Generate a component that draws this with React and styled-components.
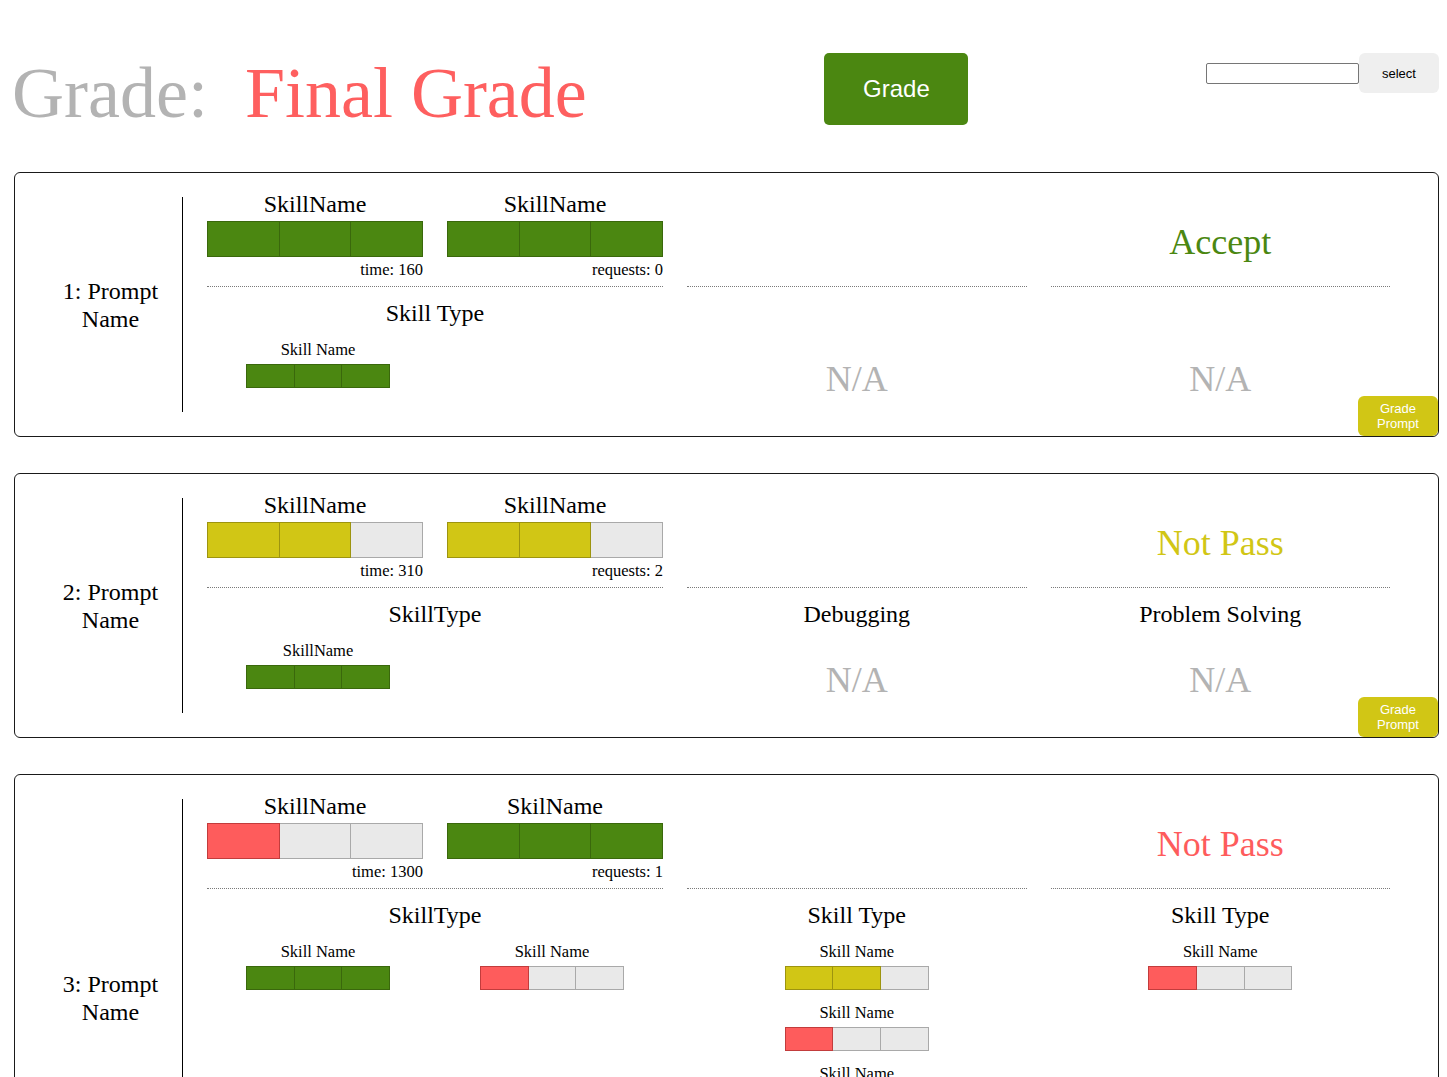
import React from 'react';
import styled, { createGlobalStyle } from 'styled-components';

const GlobalStyle = createGlobalStyle`
  *, *::before, *::after {
    box-sizing: border-box;
  }
  body {
    margin: 0;
    background: #ffffff;
    color: #000000;
    font-family: "Liberation Serif", "Times New Roman", serif;
  }
`;

const tones = {
  green: { bg: '#4b8711', line: '#3a680c' },
  yellow: { bg: '#d1c615', line: '#9d940f' },
  red: { bg: '#fe5c5c', line: '#c23c3c' },
  empty: { bg: '#e9e9e9', line: '#a9a9a9' },
};

const levelTone = { 3: 'green', 2: 'yellow', 1: 'red' };

const Page = styled.div`
  padding: 53px 8px 40px 14px;
`;

const Header = styled.header`
  display: flex;
  justify-content: space-between;
  align-items: flex-start;
  margin-bottom: 39px;
`;

const Title = styled.h1`
  margin: 0 0 0 -2px;
  font-size: 72px;
  font-weight: normal;
  line-height: 80px;
  white-space: nowrap;
`;

const TitleLabel = styled.span`
  color: #b3b3b3;
  margin-right: 37px;
`;

const TitleValue = styled.span`
  color: #fe5f5f;
`;

const GradeButton = styled.button`
  width: 144px;
  height: 72px;
  border: none;
  border-radius: 5px;
  background: #4b8711;
  color: #ffffff;
  font-family: "Liberation Sans", Arial, sans-serif;
  font-size: 24px;
`;

const Search = styled.div`
  display: flex;
  align-items: center;
`;

const SearchInput = styled.input`
  width: 153px;
  height: 21px;
  border: 1px solid #767676;
  border-radius: 2px;
  padding: 1px 2px;
  font-size: 13px;
`;

const SelectButton = styled.button`
  width: 80px;
  height: 40px;
  border: none;
  border-radius: 6px;
  background: #efefef;
  color: #000000;
  font-family: "Liberation Sans", Arial, sans-serif;
  font-size: 13px;
`;

const Card = styled.section`
  position: relative;
  display: flex;
  border: 1px solid #1a1a1a;
  border-radius: 6px;
  padding: 18px 24px 24px;
  margin-bottom: 36px;
`;

const PromptCol = styled.div`
  flex: 0 0 144px;
  margin-top: 6px;
  border-right: 1px solid #000000;
  display: flex;
  align-items: center;
  justify-content: center;
  text-align: center;
  font-size: 24px;
  line-height: 28px;
`;

const Body = styled.div`
  flex: 1;
  padding: 0 24px;
  display: grid;
  grid-template-columns: 456px 1fr 1fr;
  column-gap: 24px;
`;

const TopCell = styled.div`
  display: flex;
  gap: 24px;
  align-items: ${p => (p.$center ? 'center' : 'flex-start')};
  justify-content: center;
  padding-bottom: 7px;
  border-bottom: 1px dotted #7a7a7a;
`;

const SkillBlock = styled.div`
  width: 216px;
`;

const SkillLabel = styled.div`
  font-size: 24px;
  line-height: 27px;
  text-align: center;
  margin-bottom: 3px;
`;

const Meta = styled.div`
  font-size: 16.5px;
  line-height: 19px;
  text-align: right;
  margin-top: 3px;
`;

const Result = styled.div`
  padding-top: 14px;
  font-size: 36px;
  line-height: 40px;
  color: ${p => tones[p.$tone].bg};
`;

const BottomCell = styled.div`
  padding-top: 13px;
  text-align: center;
`;

const GroupTitle = styled.div`
  height: 27px;
  font-size: 24px;
  line-height: 27px;
  margin-bottom: 13px;
`;

const ItemGrid = styled.div`
  display: grid;
  grid-template-columns: repeat(auto-fill, minmax(234px, 1fr));
  row-gap: 13px;
  margin: 0 -6px 24px;
`;

const Item = styled.div`
  display: flex;
  flex-direction: column;
  align-items: center;
`;

const ItemLabel = styled.div`
  font-size: 16.5px;
  line-height: 19px;
  margin-bottom: 5px;
`;

const NotAvailable = styled.div`
  margin-top: 32px;
  font-size: 36px;
  line-height: 40px;
  color: #b3b3b3;
`;

const BarTrack = styled.div`
  display: flex;
  width: ${p => p.$w}px;
  height: ${p => p.$h}px;
`;

const Segment = styled.div`
  flex: 1;
  position: relative;
  z-index: ${p => (p.$tone === 'empty' ? 0 : 1)};
  background: ${p => tones[p.$tone].bg};
  border: 1px solid ${p => tones[p.$tone].line};
  & + & {
    margin-left: -1px;
  }
`;

const GradePrompt = styled.button`
  position: absolute;
  right: 0;
  bottom: 0;
  width: 80px;
  height: 40px;
  border: none;
  border-radius: 6px;
  background: #d1c615;
  color: #ffffff;
  font-family: "Liberation Sans", Arial, sans-serif;
  font-size: 13px;
  line-height: 15px;
  padding: 0 12px;
`;

const prompts = [
  {
    id: 1,
    name: 'Prompt Name',
    skills: [
      { name: 'SkillName', level: 3, meta: 'time: 160' },
      { name: 'SkillName', level: 3, meta: 'requests: 0' },
    ],
    result: { text: 'Accept', tone: 'green' },
    groups: [
      { title: 'Skill Type', items: [{ name: 'Skill Name', level: 3 }] },
      { title: '', items: null },
      { title: '', items: null },
    ],
  },
  {
    id: 2,
    name: 'Prompt Name',
    skills: [
      { name: 'SkillName', level: 2, meta: 'time: 310' },
      { name: 'SkillName', level: 2, meta: 'requests: 2' },
    ],
    result: { text: 'Not Pass', tone: 'yellow' },
    groups: [
      { title: 'SkillType', items: [{ name: 'SkillName', level: 3 }] },
      { title: 'Debugging', items: null },
      { title: 'Problem Solving', items: null },
    ],
  },
  {
    id: 3,
    name: 'Prompt Name',
    skills: [
      { name: 'SkillName', level: 1, meta: 'time: 1300' },
      { name: 'SkilName', level: 3, meta: 'requests: 1' },
    ],
    result: { text: 'Not Pass', tone: 'red' },
    groups: [
      {
        title: 'SkillType',
        items: [
          { name: 'Skill Name', level: 3 },
          { name: 'Skill Name', level: 1 },
        ],
      },
      {
        title: 'Skill Type',
        items: [
          { name: 'Skill Name', level: 2 },
          { name: 'Skill Name', level: 1 },
          { name: 'Skill Name', level: 3 },
          { name: 'Skill Name', level: 2 },
        ],
      },
      { title: 'Skill Type', items: [{ name: 'Skill Name', level: 1 }] },
    ],
  },
];

const Bar = ({ level, w, h }) => (
  <BarTrack $w={w} $h={h}>
    {[0, 1, 2].map(i => (
      <Segment key={i} $tone={i < level ? levelTone[level] : 'empty'} />
    ))}
  </BarTrack>
);

const PromptCard = ({ prompt }) => (
  <Card>
    <PromptCol>
      {prompt.id}: {prompt.name}
    </PromptCol>
    <Body>
      <TopCell>
        {prompt.skills.map((s, i) => (
          <SkillBlock key={i}>
            <SkillLabel>{s.name}</SkillLabel>
            <Bar level={s.level} w={216} h={36} />
            <Meta>{s.meta}</Meta>
          </SkillBlock>
        ))}
      </TopCell>
      <TopCell />
      <TopCell $center>
        <Result $tone={prompt.result.tone}>{prompt.result.text}</Result>
      </TopCell>
      {prompt.groups.map((g, i) => (
        <BottomCell key={i}>
          <GroupTitle>{g.title}</GroupTitle>
          {g.items ? (
            <ItemGrid>
              {g.items.map((it, j) => (
                <Item key={j}>
                  <ItemLabel>{it.name}</ItemLabel>
                  <Bar level={it.level} w={144} h={24} />
                </Item>
              ))}
            </ItemGrid>
          ) : (
            <NotAvailable>N/A</NotAvailable>
          )}
        </BottomCell>
      ))}
    </Body>
    <GradePrompt>Grade Prompt</GradePrompt>
  </Card>
);

const App = () => (
  <>
    <GlobalStyle />
    <Page>
      <Header>
        <Title>
          <TitleLabel>Grade:</TitleLabel>
          <TitleValue>Final Grade</TitleValue>
        </Title>
        <GradeButton>Grade</GradeButton>
        <Search>
          <SearchInput type="text" />
          <SelectButton>select</SelectButton>
        </Search>
      </Header>
      {prompts.map(p => (
        <PromptCard key={p.id} prompt={p} />
      ))}
    </Page>
  </>
);

export default App;
